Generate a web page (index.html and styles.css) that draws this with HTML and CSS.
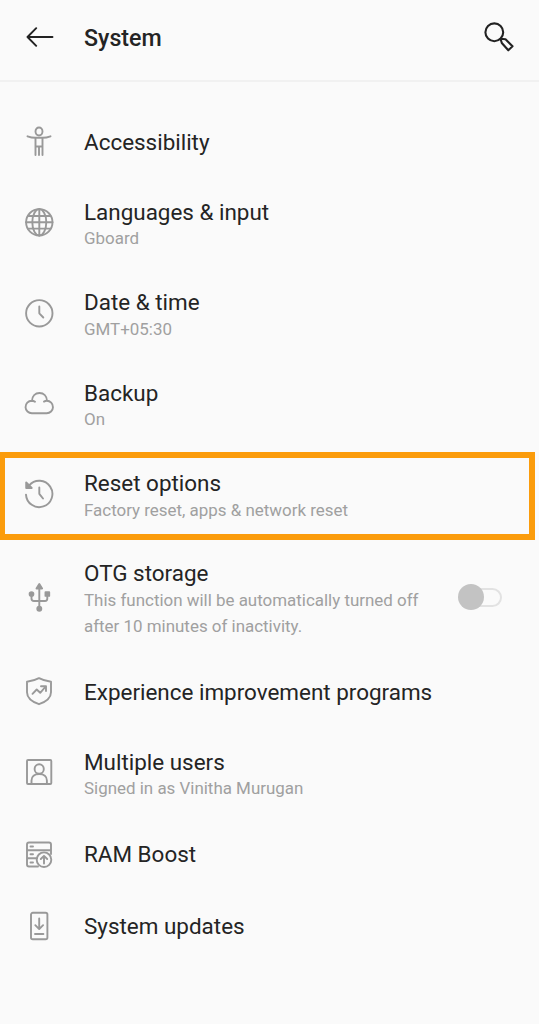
FILE: index.html
```html
<!DOCTYPE html>
<html lang="en">
<head>
<meta charset="utf-8">
<title>System</title>
<link rel="stylesheet" href="styles.css">
</head>
<body>
<header class="header">
  <svg class="back" viewBox="0 0 28 20"><path d="M26.500 10H1.500M10.200 1.200L1.500 10l8.700 8.800"/></svg>
  <h1 class="heading">System</h1>
  <svg class="search" viewBox="0 0 30 30"><circle cx="10.300" cy="10.300" r="8.900"/><path d="M16.500 16.800l1.300 4.200 6.500 7.300 4.200-4-7-7z"/></svg>
</header>
<main class="list">
  <section class="row single">
    <svg class="icon" viewBox="0 0 30 30"><ellipse cx="15" cy="5.500" rx="3.500" ry="4"/><path d="M3.500 10.300c3 1.100 5.500 1.500 8 1.500h7c2.500 0 5-.4 8-1.500M11.500 12v17M18.500 12v17M11.500 20.500h7M15 20.500V29"/></svg>
    <div class="text"><h2 class="title">Accessibility</h2></div>
  </section>
  <section class="row double">
    <svg class="icon" viewBox="0 0 30 30"><circle cx="15.300" cy="15.300" r="13.200"/><ellipse cx="15.300" cy="15.300" rx="7" ry="13.200"/><path d="M15.300 2v26.500M2 15.300h26.500M4 9h22.600M4 21.600h22.600"/></svg>
    <div class="text"><h2 class="title">Languages &amp; input</h2><p class="sub">Gboard</p></div>
  </section>
  <section class="row double">
    <svg class="icon" viewBox="0 0 30 30"><circle cx="15.300" cy="15.300" r="13.200"/><path d="M15.300 8.500v6.800l4 4.200"/></svg>
    <div class="text"><h2 class="title">Date &amp; time</h2><p class="sub">GMT+05:30</p></div>
  </section>
  <section class="row double">
    <svg class="icon" viewBox="0 0 30 30"><path d="M11 13.800c-1.100-.8-2.200-1.100-3.300-1.100A6.200 6.200 0 0 0 8 25.300h14.600a6.200 6.200 0 0 0 .2-12.500c-1 0-1.900.2-2.800.8M8 12.700C8.200 8 11.200 5 15.500 5s7.300 3 7.500 7.700"/></svg>
    <div class="text"><h2 class="title">Backup</h2><p class="sub">On</p></div>
  </section>
  <section class="row double marked">
    <svg class="icon" viewBox="0 0 30 30"><path d="M5.200 6.300A13.200 13.200 0 1 1 2 15.600M15.300 8.500v6.300l3.700 4.700"/><path class="solid" d="M2.200 3.500v5.500h5.500z"/></svg>
    <div class="text"><h2 class="title">Reset options</h2><p class="sub">Factory reset, apps &amp; network reset</p></div>
  </section>
  <section class="row triple">
    <svg class="icon" viewBox="0 0 30 30"><path d="M15.300 4v22M7.500 12v4.500q0 2.500 2.500 2.500h11q2.300 0 2.300-2.500V12"/><path class="solid" d="M15.300 2l2.800 4.500h-5.600z"/><circle class="solid" cx="7.500" cy="12" r="1.900"/><path class="solid" d="M21.500 10.200h3.700v3.700h-3.700z"/><circle class="solid" cx="15.300" cy="26.800" r="2"/></svg>
    <div class="text"><h2 class="title">OTG storage</h2><p class="sub">This function will be automatically turned off<br>after 10 minutes of inactivity.</p></div>
    <div class="switch"><span class="knob"></span></div>
  </section>
  <section class="row single">
    <svg class="icon" viewBox="0 0 30 30"><path d="M15 2.200c3.500 1.900 7.500 3 12 3.500v10.500c0 5.500-5 9.500-12 12-7-2.500-12-6.500-12-12V5.700C7.500 5.200 11.500 4.100 15 2.200zM8.500 17.800l4.200-4.300 3.500 3.300 5.500-6.300M17 10.200h5V15"/></svg>
    <div class="text"><h2 class="title">Experience improvement programs</h2></div>
  </section>
  <section class="row double">
    <svg class="icon" viewBox="0 0 30 30"><rect x="3" y="3" width="24.300" height="24" rx="1"/><ellipse cx="15.200" cy="12" rx="4.600" ry="4.800"/><path d="M7.500 27v-3.500c0-4 3-6.500 7.700-6.500s7.700 2.500 7.700 6.500V27"/></svg>
    <div class="text"><h2 class="title">Multiple users</h2><p class="sub">Signed in as Vinitha Murugan</p></div>
  </section>
  <section class="row single">
    <svg class="icon" viewBox="0 0 30 30"><path d="M14 27.500H5q-2 0-2-2v-20q0-2 2-2h20q2 0 2 2v8.200M3 11.300h24M3 19.300h10M27 11v4M6.500 7.500h2.500M6.500 15.300h2.500M6.500 23.500h2.500"/><circle cx="20" cy="20.700" r="7.300"/><path d="M20 24.500v-7.500M16.800 20l3.200-3.200 3.200 3.200"/></svg>
    <div class="text"><h2 class="title">RAM Boost</h2></div>
  </section>
  <section class="row single">
    <svg class="icon" viewBox="0 0 30 30"><rect x="7" y="1.800" width="16.400" height="26.500" rx="1.800"/><path d="M15.200 7.500v10M11.300 14.200l3.900 3.900 3.900-3.900M11 23h8.400"/></svg>
    <div class="text"><h2 class="title">System updates</h2></div>
  </section>
</main>
</body>
</html>
```
FILE: styles.css
```css
*, *::before, *::after { box-sizing: border-box; }
body {
  margin: 0;
  min-height: 1024px;
  background: #fafafa;
  font-family: Roboto, sans-serif;
  color: #242424;
}
svg { fill: none; stroke-linecap: round; stroke-linejoin: round; flex: none; }
.header {
  display: flex;
  align-items: center;
  height: 82px;
  padding: 0 25px 7px 26px;
  border-bottom: 2px solid #f1f1f1;
}
.back { width: 28px; height: 20px; stroke: #222; stroke-width: 1.9; }
.heading {
  flex: 1;
  margin: 0 0 0 30px;
  padding-top: 3px;
  font-size: 23.200px;
  line-height: 30px;
  font-weight: 500;
}
.search { width: 30px; height: 30px; stroke: #222; stroke-width: 2.1; }
.list { padding-top: 24.200px; }
.row {
  display: flex;
  align-items: center;
  padding: 0 37px 0 24px;
}
.single { height: 72px; }
.double { height: 90.400px; }
.triple { height: 116.500px; }
.marked { position: relative; }
.marked::after {
  content: "";
  position: absolute;
  inset: 4px 4px -1px 0;
  border: 6px solid #fb9c0c;
  border-width: 6px 6px 6px 5.500px;
  transform: translateY(-1px);
}
.icon { width: 30px; height: 30px; margin-bottom: 2px; stroke: #999; stroke-width: 1.9; }
.solid { fill: #999; }
.text { flex: 1; margin-left: 30px; white-space: nowrap; }
.double .text, .triple .text { padding-top: 4px; }
.title {
  margin: 0;
  font-size: 22.450px;
  line-height: 26.400px;
  font-weight: 400;
}
.sub {
  margin: 0;
  font-size: 16.930px;
  line-height: 26.400px;
  color: #a0a0a0;
}
.switch {
  position: relative;
  width: 44px;
  height: 26px;
  margin-bottom: 2px;
  display: flex;
  align-items: center;
  justify-content: flex-end;
}
.switch::before {
  content: "";
  width: 34px;
  height: 19px;
  border: 2px solid #e2e2e2;
  border-radius: 10px;
}
.knob {
  position: absolute;
  left: 0;
  top: 0;
  width: 26px;
  height: 26px;
  border-radius: 50%;
  background: #c3c3c3;
}
```
